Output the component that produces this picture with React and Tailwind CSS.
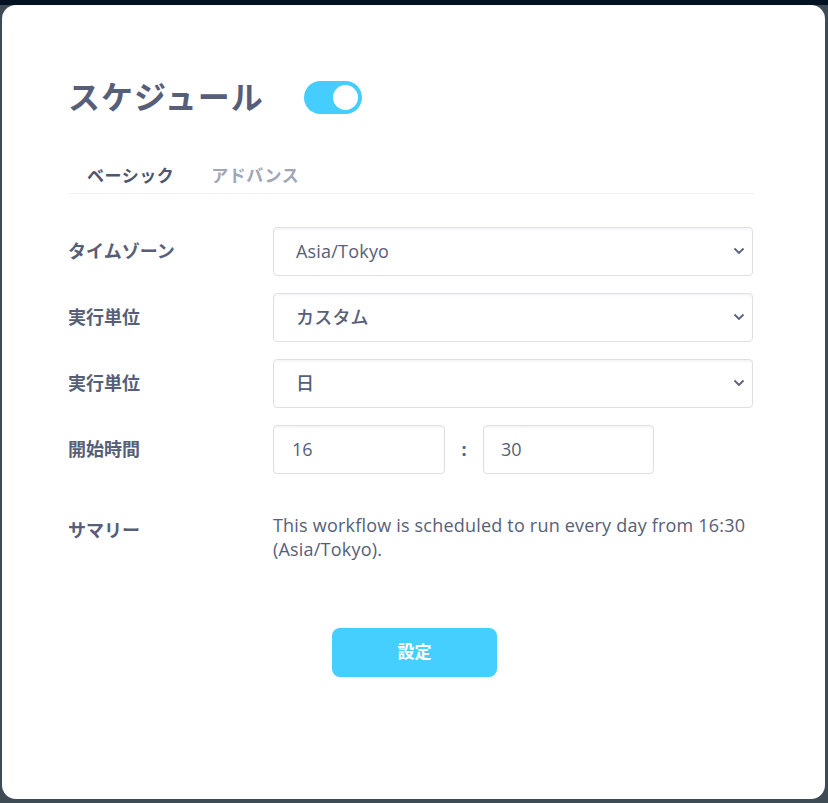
const font = { fontFamily: '"Open Sans", "Noto Sans CJK JP", sans-serif' };

function Chevron() {
  return (
    <svg width="12" height="8" viewBox="0 0 12 8" className="absolute right-[7px] top-1/2 -translate-y-1/2">
      <path d="M1.5 1.5 L6 6 L10.5 1.5" fill="none" stroke="#5a6079" strokeWidth="1.8" />
    </svg>
  );
}

function SelectBox({ value }) {
  return (
    <div className="relative h-[49px] w-[480px] rounded-[4px] border border-[#dcdfe6] bg-white shadow-[inset_0_2px_2px_rgba(0,0,0,0.04)] flex items-center pl-[22px] text-[18px] font-medium tracking-[0.2px] text-[#575e78]">
      {value}
      <Chevron />
    </div>
  );
}

function Row({ label, children }) {
  return (
    <div className="flex items-center">
      <div className="w-[205px] text-[18px] font-bold text-[#575e78]">{label}</div>
      {children}
    </div>
  );
}

export default function App() {
  return (
    <div className="h-[803px] w-[828px] bg-[#3e4a54] pt-[5px] pl-[2px] relative" style={font}>
      <div className="absolute left-0 top-0 h-[5px] w-full bg-[#021222]" />
      <div className="relative h-[794px] w-[823px] rounded-[14px] bg-white pl-[66px] pr-[70px]">
        {/* タイトル */}
        <div className="flex items-center pt-[68px]">
          <h1 className="text-[32px] font-bold text-[#575e78] tracking-[1px]">スケジュール</h1>
          <div className="ml-[40px] flex h-[33px] w-[58px] items-center justify-end rounded-full bg-[#45cdfe] pr-[4px]">
            <div className="h-[25px] w-[25px] rounded-full bg-white" />
          </div>
        </div>

        {/* タブ */}
        <div className="mt-[42px] flex border-b border-[#f0f1f3] pl-[19px] pb-[4px] text-[17px] font-bold">
          <span className="text-[#4f556f] tracking-[0.5px]">ベーシック</span>
          <span className="ml-[37px] text-[#a0a6b5] tracking-[0.5px]">アドバンス</span>
        </div>

        {/* フォーム */}
        <div className="mt-[33px] flex flex-col gap-[17px]">
          <Row label="タイムゾーン"><SelectBox value="Asia/Tokyo" /></Row>
          <Row label="実行単位"><SelectBox value="カスタム" /></Row>
          <Row label="実行単位"><SelectBox value="日" /></Row>
          <Row label="開始時間">
            <div className="flex items-center">
              <div className="flex h-[49px] w-[172px] items-center rounded-[4px] border border-[#dcdfe6] shadow-[inset_0_2px_2px_rgba(0,0,0,0.04)] pl-[18px] text-[18px] font-medium text-[#575e78]">16</div>
              <span className="w-[38px] text-center text-[18px] font-bold text-[#575e78]">:</span>
              <div className="flex h-[49px] w-[171px] items-center rounded-[4px] border border-[#dcdfe6] shadow-[inset_0_2px_2px_rgba(0,0,0,0.04)] pl-[17px] text-[18px] font-medium text-[#575e78]">30</div>
            </div>
          </Row>
        </div>

        <div className="mt-[39px] flex items-start">
          <div className="w-[205px] pt-[4px] text-[18px] font-bold text-[#575e78]">サマリー</div>
          <p className="w-[480px] text-[18px] font-medium leading-[24px] tracking-[0.2px] text-[#575e78]">
            This workflow is scheduled to run every day from 16:30 (Asia/Tokyo).
          </p>
        </div>

        <div className="mt-[67px] flex pl-[264px]">
          <button className="h-[49px] w-[165px] rounded-[8px] bg-[#45cfff] text-[17px] font-bold text-white">設定</button>
        </div>
      </div>
    </div>
  );
}
